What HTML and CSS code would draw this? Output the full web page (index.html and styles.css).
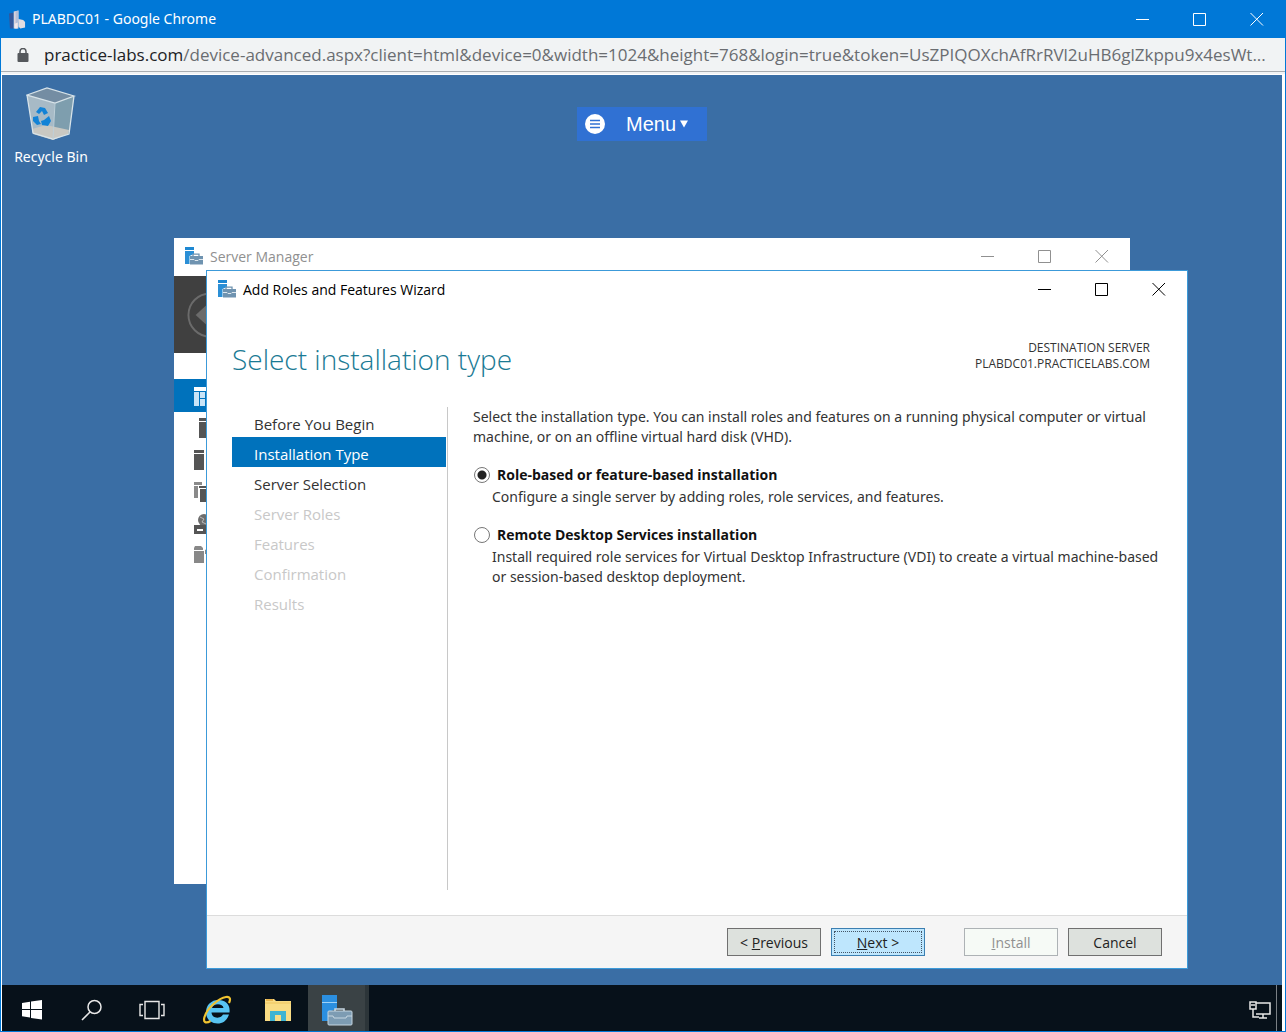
FILE: index.html
```html
<!DOCTYPE html>
<html lang="en">
<head>
<meta charset="utf-8">
<title>PLABDC01 - Google Chrome</title>
<link rel="stylesheet" href="styles.css">
</head>
<body>
<svg class="defs" aria-hidden="true">
  <symbol id="ic-min" viewBox="0 0 14 14"><path d="M0 7.500h13" fill="none" stroke="currentColor"/></symbol>
  <symbol id="ic-max" viewBox="0 0 14 14"><path d="M.5 1.500h12v12h-12z" fill="none" stroke="currentColor"/></symbol>
  <symbol id="ic-close" viewBox="0 0 14 14"><path d="M.5 1l12.500 12.500M13 1L.5 13.500" fill="none" stroke="currentColor"/></symbol>
  <symbol id="ic-server" viewBox="0 0 18 18">
    <path d="M0 0h9v3H0z" fill="#1e88d2"/><path d="M0 4h9v3L4.500 9v8H0z" fill="#2b8fd6"/>
    <path d="M8 9V7.200h6V9" fill="none" stroke="#6f93b0" stroke-width="1.300"/>
    <path d="M5 9h13v8.500H5z" fill="#6f93b0"/><path d="M5 12.500h4l1 1h3l1-1h4" fill="none" stroke="#dde7ee"/>
  </symbol>
</svg>
<div class="browser">
  <header class="titlebar">
    <svg class="favicon" viewBox="0 0 18 20"><path d="M0 3l5-1v17H1z" fill="#33579b"/><path d="M5 1l5-1v19H5z" fill="#d9d3dc"/><path d="M7 1l3-1v12l-3 2z" fill="#b5bfd8"/><path d="M10 9l5 1 2 2v6l-5 1-2-2z" fill="#e2dde1"/><path d="M6 14l3-1v6H6z" fill="#f1e9ec"/></svg>
    <h1 class="titlebar-text">PLABDC01 - Google Chrome</h1>
    <div class="controls">
      <button class="ctl" aria-label="Minimize"><svg><use href="#ic-min"/></svg></button>
      <button class="ctl" aria-label="Maximize"><svg><use href="#ic-max"/></svg></button>
      <button class="ctl" aria-label="Close"><svg><use href="#ic-close"/></svg></button>
    </div>
  </header>
  <div class="address">
    <svg class="lock" viewBox="0 0 12 14"><path d="M3 6V3.500a3 3 0 016 0V6" fill="none" stroke="#55585c" stroke-width="1.500"/><rect x=".5" y="5" width="11" height="9" rx="1" fill="#55585c"/></svg>
    <div class="url"><span class="host">practice-labs.com</span>/device-advanced.aspx?client=html&amp;device=0&amp;width=1024&amp;height=768&amp;login=true&amp;token=UsZPIQOXchAfRrRVl2uHB6glZkppu9x4esWt...</div>
  </div>
  <main class="screen">
    <div class="desktop">
      <button class="menu">
        <svg class="menu-icon" viewBox="0 0 20 20"><circle cx="10" cy="10" r="10" fill="#fff"/><path d="M5 6.500h10M5 10h10M5 13.500h10" stroke="#3071d3" stroke-width="1.600"/></svg>
        <span>Menu</span>
        <svg class="caret" viewBox="0 0 8 8"><path d="M0 .5h8L4 7.500z" fill="#fff"/></svg>
      </button>
      <a class="shortcut" href="#">
        <svg class="bin" viewBox="0 0 50 54">
          <path d="M1 8L21 1l27 8-19 8z" fill="#748da3"/>
          <path d="M1 8l28 8-2 36-20-6z" fill="#a7bac6"/>
          <path d="M48 9l-19 7-2 36 16-5z" fill="#7e9eae"/>
          <path d="M6 42l14-4 23 5-1 4-15 6-20-6z" fill="#c9c8c2"/>
          <path d="M1 8L21 1l27 8-19 7zM1 8l6 38 20 6 16-5 5-38" fill="none" stroke="#d7e3e9" stroke-width="1.300"/>
          <path d="M29 16l-2 36" stroke="#bfd0d9"/>
          <path d="M10 25l4-5 5 1 3 5-4 2-2-4-3 3zM7 30l5-1 1 5 2 3-4 1-4-4zM18 33l5-4 2 5-3 5-6-1-1-4z" fill="#1383d6"/>
        </svg>
        <span>Recycle Bin</span>
      </a>

      <section class="window manager" aria-label="Server Manager">
        <header class="win-title">
          <svg class="win-icon"><use href="#ic-server"/></svg>
          <h2 class="win-name">Server Manager</h2>
          <div class="controls">
            <button class="ctl" aria-label="Minimize"><svg><use href="#ic-min"/></svg></button>
            <button class="ctl" aria-label="Maximize"><svg><use href="#ic-max"/></svg></button>
            <button class="ctl" aria-label="Close"><svg><use href="#ic-close"/></svg></button>
          </div>
        </header>
        <div class="ribbon"><svg class="back" viewBox="0 0 48 48"><circle cx="24" cy="24" r="22.500" fill="none" stroke="#6b6b6b" stroke-width="2"/><path d="M9 24L21 13v22z" fill="#6b6b6b"/></svg></div>
        <nav class="rail">
          <a class="rail-item current" href="#" aria-label="Dashboard"><svg viewBox="0 0 20 20"><path d="M0 1h20v4H0z" fill="#fff"/><path d="M0 6h5v14H0zM6 6h5v6H6zM6 13h5v7H6zM12 6h8v14h-8z" fill="#c9e4f7"/></svg></a>
          <a class="rail-item" href="#" aria-label="Local Server"><svg viewBox="0 0 20 20"><path d="M5 0h11v3H5zM5 4h11v16H5z" fill="#555"/></svg></a>
          <a class="rail-item" href="#" aria-label="All Servers"><svg viewBox="0 0 20 20"><path d="M0 0h10v3H0zM0 4h10v16H0zM12 4h8v16h-8z" fill="#555"/></svg></a>
          <a class="rail-item" href="#" aria-label="AD DS"><svg viewBox="0 0 20 20"><path d="M0 0h8v3H0zM0 4h4v12H0z" fill="#8a8a8a"/><path d="M5 4h11v2H5zM6 7h10v13H6z" fill="#555"/></svg></a>
          <a class="rail-item" href="#" aria-label="DNS"><svg viewBox="0 0 20 20"><circle cx="10" cy="6" r="6" fill="#6d6d6d"/><path d="M6 3l4 2-2 3 4 2" fill="none" stroke="#bbb"/><path d="M0 11h20v9H0z" fill="#555"/><path d="M3 16h6" stroke="#fff" stroke-width="2"/></svg></a>
          <a class="rail-item" href="#" aria-label="File and Storage Services"><svg viewBox="0 0 20 20"><path d="M0 2l1-2h6l2 2v2H0zM0 5h10v12H0zM11 4l4-2v6h-4z" fill="#888"/></svg></a>
        </nav>
      </section>

      <section class="window wizard" aria-label="Add Roles and Features Wizard">
        <header class="win-title">
          <svg class="win-icon"><use href="#ic-server"/></svg>
          <h2 class="win-name">Add Roles and Features Wizard</h2>
          <div class="controls">
            <button class="ctl" aria-label="Minimize"><svg><use href="#ic-min"/></svg></button>
            <button class="ctl" aria-label="Maximize"><svg><use href="#ic-max"/></svg></button>
            <button class="ctl" aria-label="Close"><svg><use href="#ic-close"/></svg></button>
          </div>
        </header>
        <div class="heading">
          <h3 class="step-title">Select installation type</h3>
          <p class="destination">DESTINATION SERVER<br>PLABDC01.PRACTICELABS.COM</p>
        </div>
        <div class="wizard-body">
          <nav class="steps">
            <a class="step" href="#">Before You Begin</a>
            <a class="step active" href="#">Installation Type</a>
            <a class="step" href="#">Server Selection</a>
            <a class="step off">Server Roles</a>
            <a class="step off">Features</a>
            <a class="step off">Confirmation</a>
            <a class="step off">Results</a>
          </nav>
          <form class="content">
            <p class="intro">Select the installation type. You can install roles and features on a running physical computer or virtual machine, or on an offline virtual hard disk (VHD).</p>
            <div class="option">
              <label class="option-label"><input type="radio" name="type" checked>Role-based or feature-based installation</label>
              <p class="option-text">Configure a single server by adding roles, role services, and features.</p>
            </div>
            <div class="option">
              <label class="option-label"><input type="radio" name="type">Remote Desktop Services installation</label>
              <p class="option-text">Install required role services for Virtual Desktop Infrastructure (VDI) to create a virtual machine-based or session-based desktop deployment.</p>
            </div>
          </form>
        </div>
        <footer class="actions">
          <button class="btn">&lt; <u>P</u>revious</button>
          <button class="btn primary"><u>N</u>ext &gt;</button>
          <button class="btn install" disabled><u>I</u>nstall</button>
          <button class="btn">Cancel</button>
        </footer>
      </section>
    </div>
    <footer class="taskbar">
      <button class="task system" aria-label="Start"><svg width="22" height="22" viewBox="0 0 22 22"><path d="M1 4l8-1.300V10H1zM10 2.500L21 1v9H10zM1 11h8v7.500L1 17.300zM10 11h11v9.500L10 19z" fill="#fff"/></svg></button>
      <button class="task system" aria-label="Search"><svg width="22" height="22" viewBox="0 0 22 22"><circle cx="13.500" cy="8" r="6.500" fill="none" stroke="#e8e8e8" stroke-width="1.500"/><path d="M9 13l-8 8" stroke="#e8e8e8" stroke-width="1.600"/></svg></button>
      <button class="task system" aria-label="Task View"><svg width="26" height="20" viewBox="0 0 26 20"><path d="M6 1.500h14v17H6zM4 4.500H1v11h3M22 4.500h3v11h-3" fill="none" stroke="#e8e8e8" stroke-width="1.400"/></svg></button>
      <div class="pinned">
        <button class="task" aria-label="Internet Explorer"><svg width="30" height="30" viewBox="0 0 30 30"><path d="M21 19.500c-3 5-11 4-11.500-2h18c1-8-4-12.500-11-12.500A12 12 0 004 17c0 7 5 11.500 11.500 11.500 5.500 0 9.500-3 11.500-9zM10 13c1-5 11-5 11.500 0z" fill="#58c4f2" fill-rule="evenodd"/><path d="M27 8c2-4 1-6.500-3-6C17 3 5 13 2.500 22c-1.500 5 1 7 6 4" fill="none" stroke="#f0c330" stroke-width="2.200"/></svg></button>
        <button class="task" aria-label="File Explorer"><svg width="28" height="26" viewBox="0 0 28 26"><path d="M1 2h9l2 2h15v20H1z" fill="#f9dc84"/><path d="M2 3h7" stroke="#e2a93c" stroke-width="1.500"/><path d="M1 6h26" stroke="#eec55f"/><path d="M6 24V14h16v10h-5v-6h-6v6z" fill="#3fb4d3"/></svg></button>
        <button class="task open" aria-label="Server Manager"><svg width="32" height="32" viewBox="0 0 32 32"><path d="M1 1h15v7H1zM1 9h15v6l-9 3v9H1z" fill="#2b8fe0"/><path d="M1 8.500h15" stroke="#9fd2f7"/><path d="M14 17v-2h9v2" fill="none" stroke="#c6d6e1" stroke-width="1.600"/><rect x="7" y="17" width="24" height="14" rx="1" fill="#7d9cb3" stroke="#c6d6e1"/><path d="M7 22h5l1 2h12l1-2h5" fill="none" stroke="#c6d6e1"/></svg></button>
      </div>
      <div class="tray"><svg width="22" height="18" viewBox="0 0 22 18"><path d="M7 2h14v11H7M4 8v8h6M14 13v4M10 17h8" fill="none" stroke="#e8e8e8" stroke-width="1.500"/><path d="M1 1h6v7H1zM2 4h4" fill="none" stroke="#e8e8e8" stroke-width="1.500"/></svg></div>
    </footer>
  </main>
</div>
</body>
</html>
```
FILE: styles.css
```css
* { box-sizing: border-box; }
body {
  margin: 0;
  font-family: "Open Sans", "Noto Sans", sans-serif;
  font-size: 14px;
  color: #333;
}
h1, h2, h3, p { margin: 0; font-weight: 400; }
button { font-family: inherit; margin: 0; }
a { color: inherit; text-decoration: none; }
.defs { display: none; }

.browser {
  display: flex;
  flex-direction: column;
  min-height: 100vh;
  border: 1px solid #0078d7;
  background: #f1f3f4;
}
.titlebar {
  display: flex;
  align-items: center;
  height: 37px;
  padding-left: 8px;
  gap: 6px;
  background: #0078d7;
  color: #fff;
}
.favicon { width: 17px; height: 20px; }
.titlebar-text { flex: 1; padding-bottom: 2px; font-family: "Noto Sans", sans-serif; font-size: 14px; }
.controls { display: flex; }
.ctl {
  display: flex;
  justify-content: center;
  align-items: center;
  width: 57px;
  height: 30px;
  padding: 0;
  border: 0;
  background: none;
  color: inherit;
}
.ctl svg { width: 14px; height: 14px; }
.titlebar .controls { padding-bottom: 1px; }

.address {
  display: flex;
  align-items: center;
  height: 34px;
  padding: 0 16px;
  gap: 15px;
  border-bottom: 1px solid #a9adb1;
  color: #6a6d71;
}
.lock { flex: none; width: 12px; height: 14px; }
.url { min-width: 0; font-size: 17px; line-height: 24px; white-space: nowrap; }
.host { color: #202124; }

.screen {
  display: flex;
  flex-direction: column;
  flex: 1;
  margin-top: 2px;
  padding-right: 2px;
  border: 1px solid #fff;
  border-bottom: 0;
  background: #fff;
}
.desktop {
  position: relative;
  flex: 1;
  min-height: 560px;
  padding-top: 32px;
  background: #3a6ea5;
}
.menu {
  display: flex;
  align-items: center;
  width: 130px;
  height: 34px;
  margin: 0 auto;
  padding: 0 8px;
  border: 0;
  background: #3071d3;
  color: #fff;
  font: 20px "Liberation Sans", Arial, sans-serif;
}
.menu-icon { width: 20px; height: 20px; margin-right: 21px; }
.caret { width: 8px; height: 8px; margin-left: 4px; }
.shortcut {
  position: absolute;
  left: 4px;
  top: 12px;
  display: flex;
  flex-direction: column;
  align-items: center;
  gap: 6px;
  width: 90px;
  font-family: "Noto Sans", sans-serif;
  color: #fff;
}
.bin { width: 50px; height: 54px; }

.window { position: absolute; display: flex; flex-direction: column; background: #fff; }
.manager { left: 172px; right: 152px; top: 163px; bottom: 101px; color: #909090; }
.wizard { left: 204px; right: 94px; top: 195px; bottom: 16px; border: 1px solid #3c9ad9; }
.win-title {
  display: flex;
  flex: none;
  align-items: center;
  height: 38px;
  padding: 0 0 2px 11px;
  gap: 7px;
}
.win-icon { width: 18px; height: 18px; }
.win-name { flex: 1; font-size: 14px; }
.wizard .win-title { color: #000; }
.ribbon { height: 77px; padding: 16px 13px; background: #404040; }
.back { width: 46px; height: 46px; }
.rail { display: flex; flex-direction: column; padding-top: 26px; }
.rail-item { display: flex; align-items: center; height: 32px; padding-left: 20px; }
.rail-item svg { width: 20px; height: 20px; }
.rail .current { height: 33px; background: #0072bc; }

.heading {
  display: flex;
  justify-content: space-between;
  height: 98px;
  padding: 30px 37px 0 25px;
}
.step-title { font-size: 28px; line-height: 40px; font-weight: 300; color: #1a7a94; }
.destination { padding-top: 1px; font-size: 12px; line-height: 16px; text-align: right; }
.wizard-body { display: flex; flex: 1; padding: 0 25px; }
.steps {
  display: flex;
  flex-direction: column;
  width: 216px;
  margin-bottom: 25px;
  padding-right: 1px;
  border-right: 1px solid #c8c8c8;
}
.step { height: 30px; padding-left: 22px; font-size: 15px; line-height: 34px; }
.active { background: #0072bc; color: #fff; }
.off { color: #c8c8c8; }
.content {
  flex: 1;
  padding-left: 25px;
  font-family: "Noto Sans", sans-serif;
  line-height: 20px;
}
.option { margin-top: 18px; }
.option-label {
  display: flex;
  align-items: center;
  gap: 7px;
  height: 20px;
  padding-left: 1px;
  font-family: "Open Sans", sans-serif;
  font-weight: 700;
  color: #111;
}
.option-label input {
  appearance: none;
  width: 16px;
  height: 16px;
  margin: 0;
  border: 1px solid #777;
  border-radius: 50%;
  background: #fff;
}
.option-label input:checked { background: radial-gradient(circle, #222 0 4px, #fff 5px); }
.option-text { margin-right: -5px; padding: 2px 0 0 19px; }

.actions {
  display: flex;
  justify-content: flex-end;
  gap: 10px;
  padding: 12px 25px;
  border-top: 1px solid #dcdcdc;
  background: #f5f5f5;
}
.btn {
  width: 94px;
  height: 28px;
  padding: 0;
  border: 1px solid #707070;
  background: #dde1dd;
  font-size: 14px;
  color: #222;
}
.primary { border-color: #3c7fb1; background: #bee6fd; outline: 1px dotted #456; outline-offset: -4px; }
.install { margin-left: 29px; border-color: #adb2b5; background: #f6faf6; color: #909090; }

.taskbar { display: flex; height: 46px; background: #07111a; }
.pinned { display: flex; margin-left: 4px; }
.task {
  display: flex;
  align-items: center;
  justify-content: center;
  width: 61px;
  padding: 4px 0 0;
  border: 0;
  background: none;
}
.system { width: 60px; }
.open { background: #3a4245; border-right: 4px solid #2c3539; }
.tray {
  display: flex;
  align-items: center;
  margin: 0 5px 0 auto;
  padding: 4px 5px 0 0;
  border-right: 1px solid #7a8085;
}
```
